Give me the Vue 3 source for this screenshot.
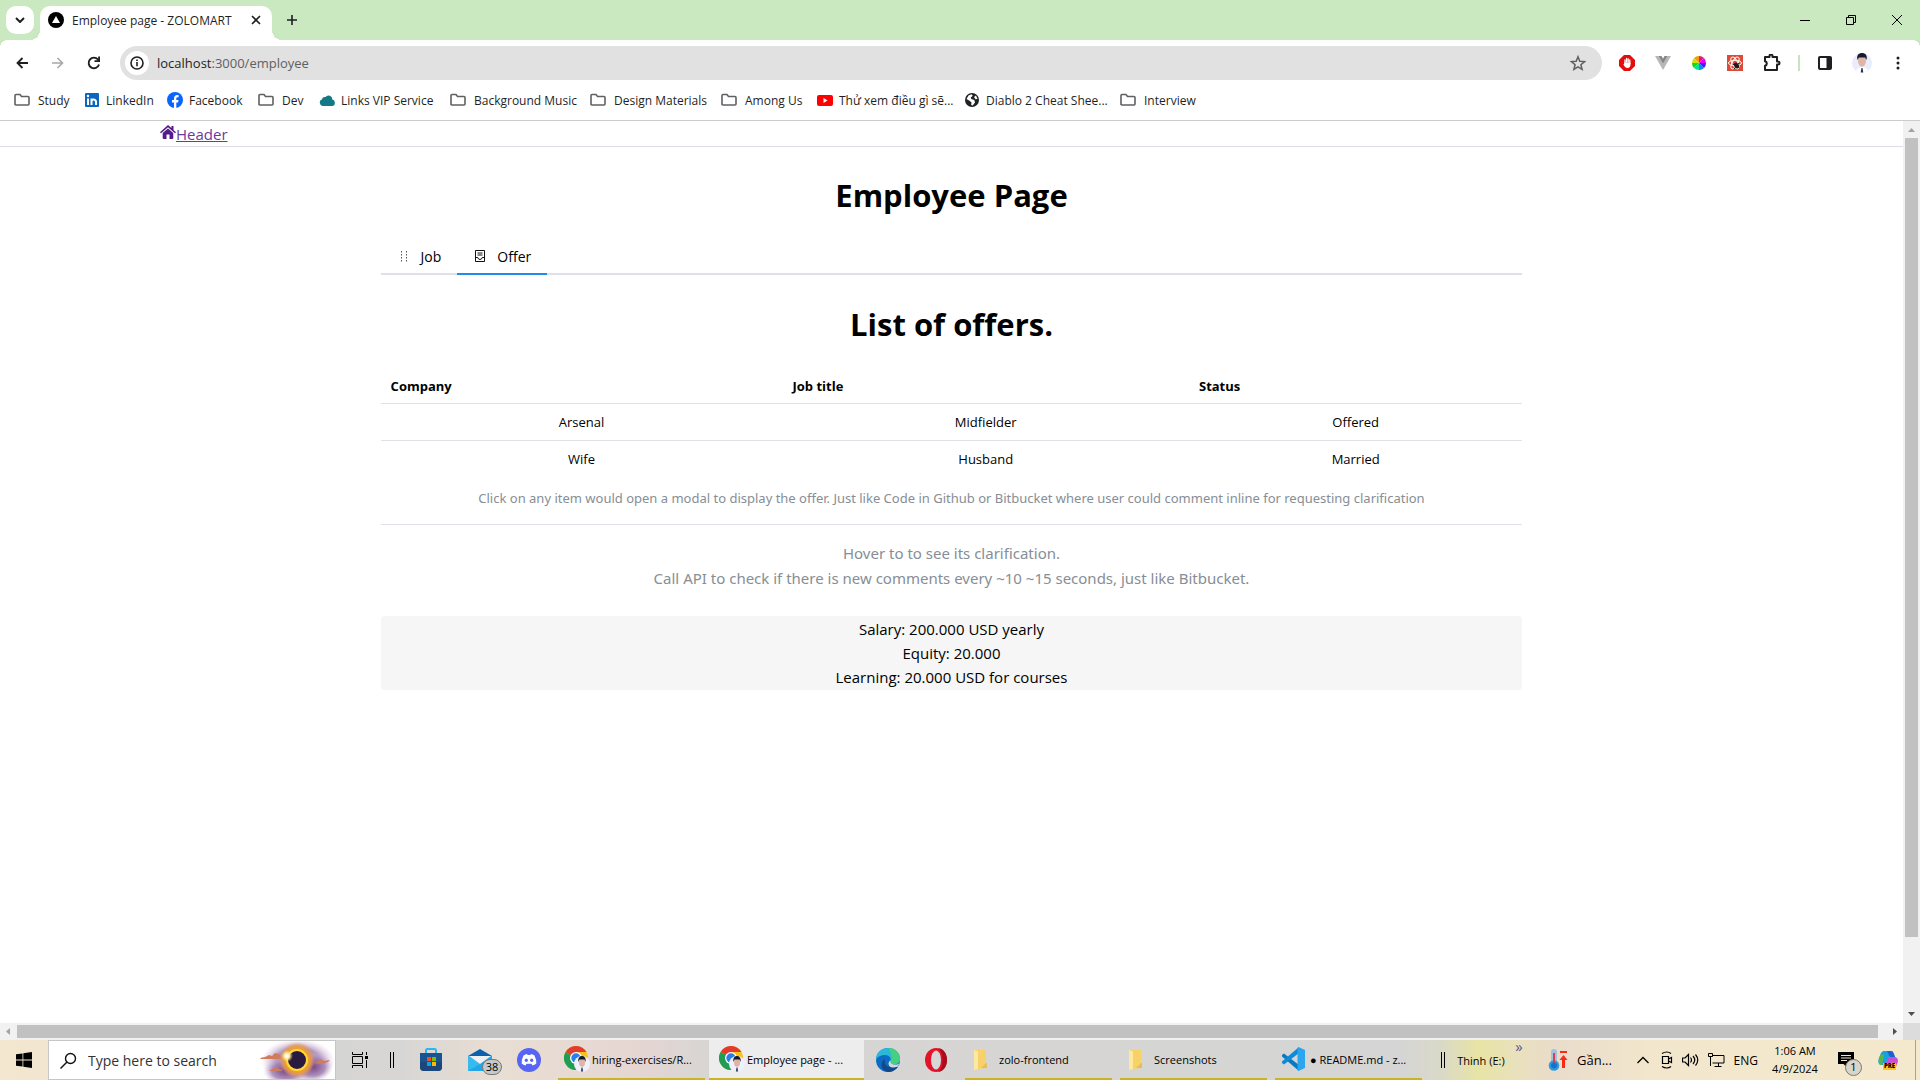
<script setup>
import { ref } from 'vue'

const bookmarks = [
  { name: 'Study', icon: 'folder', width: 70 },
  { name: 'LinkedIn', icon: 'linkedin', width: 83 },
  { name: 'Facebook', icon: 'facebook', width: 91 },
  { name: 'Dev', icon: 'folder', width: 61 },
  { name: 'Links VIP Service', icon: 'cloud', width: 131 },
  { name: 'Background Music', icon: 'folder', width: 140 },
  { name: 'Design Materials', icon: 'folder', width: 131 },
  { name: 'Among Us', icon: 'folder', width: 96 },
  { name: 'Thử xem điều gì sẽ...', icon: 'youtube', width: 147 },
  { name: 'Diablo 2 Cheat Shee...', icon: 'globe', width: 156 },
  { name: 'Interview', icon: 'folder', width: 90 },
]

const offers = [
  { company: 'Arsenal', title: 'Midfielder', status: 'Offered' },
  { company: 'Wife', title: 'Husband', status: 'Married' },
]

const activeTab = ref('offer')
const search = ref('')
</script>

<template>
  <div class="screen">
    <header class="tabstrip">
      <button class="tab-search" aria-label="Search tabs">
        <svg width="10" height="6" viewBox="0 0 10 6"><path d="M1 1l4 4 4-4" fill="none" stroke="#1f1f1f" stroke-width="2" /></svg>
      </button>
      <div class="browser-tab">
        <svg width="16" height="16" viewBox="0 0 16 16"><circle cx="8" cy="8" r="8" /><path d="M8 4l4 7H4z" fill="#fff" /></svg>
        <span class="browser-tab-title">Employee page - ZOLOMART</span>
        <button class="tab-close" aria-label="Close tab">
          <svg width="10" height="10" viewBox="0 0 10 10"><path d="M1 1l8 8M9 1l-8 8" stroke="#1f1f1f" stroke-width="1.600" /></svg>
        </button>
      </div>
      <button class="new-tab" aria-label="New tab">
        <svg width="10" height="10" viewBox="0 0 10 10"><path d="M5 0v10M0 5h10" stroke="#1f1f1f" stroke-width="1.600" /></svg>
      </button>
      <div class="window-controls">
        <button aria-label="Minimize"><svg width="10" height="10" viewBox="0 0 10 10"><path d="M0 5.500h10" stroke="#000" /></svg></button>
        <button aria-label="Restore"><svg width="10" height="10" viewBox="0 0 10 10"><path d="M.5 2.500h7v7h-7zM2.500 2.500v-2h7v7h-2" fill="none" stroke="#000" /></svg></button>
        <button aria-label="Close"><svg width="10" height="10" viewBox="0 0 10 10"><path d="M0 0l10 10M10 0L0 10" stroke="#000" /></svg></button>
      </div>
    </header>

    <div class="toolbar">
      <div class="nav-buttons">
        <button aria-label="Back"><svg width="12" height="12" viewBox="0 0 12 12"><path d="M12 6H1.500M6.500 1L1.500 6l5 5" fill="none" stroke="#1f1f1f" stroke-width="1.800" /></svg></button>
        <button aria-label="Forward" disabled><svg width="12" height="12" viewBox="0 0 12 12"><path d="M0 6h10.500M5.500 1l5 5-5 5" fill="none" stroke="#a8a8a8" stroke-width="1.600" /></svg></button>
        <button aria-label="Reload"><svg width="14" height="14" viewBox="0 0 14 14"><path d="M12 8.500A5.300 5.300 0 1 1 11 3.500L12.500 5" fill="none" stroke="#1f1f1f" stroke-width="1.900" /><path d="M13 .5V6H7.500V4.300h3.700V.5z" fill="#1f1f1f" /></svg></button>
      </div>
      <div class="omnibox">
        <button class="site-info" aria-label="View site information">
          <svg width="14" height="14" viewBox="0 0 14 14"><circle cx="7" cy="7" r="6" fill="none" stroke="#1f1f1f" stroke-width="1.600" /><path d="M7 6v4.300M7 3.500v1.600" stroke="#1f1f1f" stroke-width="1.600" /></svg>
        </button>
        <a class="url" href="http://localhost:3000/employee">localhost<span>:3000/employee</span></a>
        <button class="star" aria-label="Bookmark this tab">
          <svg width="16" height="16" viewBox="0 0 16 16"><path d="M8 1.700l1.800 4.500 4.800.4-3.700 3.100 1.200 4.700L8 11.900l-4.100 2.500 1.200-4.700-3.700-3.100 4.800-.4z" fill="none" stroke="#5f6063" stroke-width="1.500" /></svg>
        </button>
      </div>
      <div class="extensions">
        <svg width="16" height="16" viewBox="0 0 16 16"><path d="M5 0h6l5 5v6l-5 5H5l-5-5V5z" fill="#e40d0d" /><path d="M6 9V5M7.600 7V3.500M9.200 7V3.800M10.800 9V5" stroke="#fff" stroke-width="1.300" stroke-linecap="round" /><path d="M5.400 7.500h6V10c0 2-1.200 3-3 3-1.500 0-2.500-.8-4-3.500l.8-.8z" fill="#fff" /></svg>
        <svg width="16" height="16" viewBox="0 0 16 16"><path d="M0 1h3.500L8 8.500 12.500 1H16L8 15z" fill="#b7b7b7" /><path d="M3.500 1h3L8 3.700 9.500 1h3L8 8.800z" fill="#858585" /></svg>
        <svg width="16" height="16" viewBox="0 0 16 16"><g transform="translate(8 8)"><path d="M0 0V-7A7 7 0 0 1 5-5z" fill="#e11d73" /><path d="M0 0L5-5A7 7 0 0 1 7 0z" fill="#e100ff" /><path d="M0 0H7A7 7 0 0 1 5 5z" fill="#4915ff" /><path d="M0 0L5 5A7 7 0 0 1 0 7z" fill="#0088f5" /><path d="M0 0V7A7 7 0 0 1-5 5z" fill="#00e49a" /><path d="M0 0L-5 5A7 7 0 0 1-7 0z" fill="#14d815" /><path d="M0 0H-7A7 7 0 0 1-5-5z" fill="#c5e80a" /><path d="M0 0L-5-5A7 7 0 0 1 0-7z" fill="#f39b08" /></g></svg>
        <svg width="16" height="16" viewBox="0 0 16 16"><path d="M0 0h16v16H0z" fill="#dc4a38" /><g fill="none" stroke="#fff"><ellipse cx="8" cy="8" rx="6.500" ry="2.700" /><ellipse cx="8" cy="8" rx="6.500" ry="2.700" transform="rotate(60 8 8)" /><ellipse cx="8" cy="8" rx="6.500" ry="2.700" transform="rotate(120 8 8)" /></g><ellipse cx="9.500" cy="10.500" rx="2.300" ry="3" fill="#24191a" transform="rotate(-35 9.500 10.500)" /><path d="M5.500 9l7 4M7 14l5-6" stroke="#24191a" /></svg>
        <svg width="18" height="18" viewBox="0 0 18 18"><path d="M2 3h4.500V2a1.500 1.500 0 0 1 3 0v1H14v4.500h1a1.500 1.500 0 0 1 0 3h-1V16H2v-4.300a2.300 2.300 0 0 0 0-4.500z" fill="none" stroke="#1f1f1f" stroke-width="2" stroke-linejoin="round" /></svg>
        <i class="toolbar-divider"></i>
        <svg width="14" height="14" viewBox="0 0 14 14"><rect x="1" y="1" width="12" height="12" rx="1" fill="none" stroke="#1f1f23" stroke-width="2" /><path d="M8.500 1H13v12H8.500z" fill="#1f1f23" /></svg>
        <svg width="20" height="20" viewBox="0 0 20 20"><circle cx="10" cy="10" r="10" fill="#e9edfb" /><path d="M4 17c2-2 4-3 6-3s4 1 6 3c-3 4-9 4-12 0z" fill="#fff" /><ellipse cx="10" cy="8" rx="4" ry="5.500" fill="#dfb5a5" /><path d="M5.500 7C4 1 8 0 10 0s6 1 4.500 7L13 4.500H7z" fill="#161a2c" /><path d="M9.500 15h1l.8 4.500H8.700z" fill="#272e50" /></svg>
        <svg width="12" height="16" viewBox="-4 0 12 16" fill="#1f1f1f"><circle cx="2" cy="3" r="1.500" /><circle cx="2" cy="8" r="1.500" /><circle cx="2" cy="13" r="1.500" /></svg>
      </div>
    </div>

    <nav class="bookmarks">
      <a v-for="b in bookmarks" :key="b.name" href="#" :class="{ site: b.icon !== 'folder' }" :style="{ width: b.width + 'px' }">
        <svg v-if="b.icon === 'folder'" width="16" height="16" viewBox="0 0 16 16"><path d="M1 13V3.500q0-1 1-1h4L7.500 4.500H14q1 0 1 1V12q0 1-1 1H2q-1 0-1-1z" fill="none" stroke="#5f6063" stroke-width="1.600" /></svg>
        <svg v-else-if="b.icon === 'linkedin'" width="16" height="16" viewBox="0 0 16 16"><rect x="1" y="1" width="14" height="14" rx="1" fill="#0a66c2" /><path d="M4 6.500V13M7.500 6.500V13M7.500 9.500q0-2 2-2T12 9.500V13" fill="none" stroke="#fff" stroke-width="2" /><circle cx="4" cy="4" r="1.200" fill="#fff" /></svg>
        <svg v-else-if="b.icon === 'facebook'" width="16" height="16" viewBox="0 0 16 16"><circle cx="8" cy="8" r="8" fill="#0866ff" /><path d="M7 16v-5.500H5V8h2V6.500C7 4.200 8.300 3 10.200 3l1.400.1v2.100h-1C9.500 5.200 9.300 5.900 9.300 6.600V8h2.200l-.4 2.500H9.300V16z" fill="#fff" /></svg>
        <svg v-else-if="b.icon === 'cloud'" width="16" height="16" viewBox="0 0 16 16"><path d="M3.500 14A3.500 3.500 0 0 1 3 7.300 3 3 0 0 1 6.500 5a3.800 3.800 0 0 1 6.800 2.500A3.300 3.300 0 0 1 13 14z" fill="#147987" /></svg>
        <svg v-else-if="b.icon === 'youtube'" width="16" height="16" viewBox="0 0 16 16"><rect y="3" width="16" height="11" rx="2" fill="#f00" /><path d="M6.500 6v5L10.500 8.500z" fill="#fff" /></svg>
        <svg v-else width="16" height="16" viewBox="0 0 16 16"><circle cx="8" cy="8" r="7" fill="#202124" /><path d="M2.500 7l2-3.500 3-1.200 1.300 1.500-2 1.700.5 1.500 3 1 .7 2.500-2.300 3-1.500-.5.300-2.500-2-1.800zM10 5l2-1.500L13.500 7l-2 .3z" fill="#fff" /></svg>
        <span>{{ b.name }}</span>
      </a>
    </nav>

    <div class="viewport">
      <main class="page">
        <div class="site-header">
          <a href="/">
            <svg width="16" height="14" viewBox="0 0 16 14"><path d="M8 0l3.500 3V1H13.500V5L16 7.200l-1 1.100L8 2.200l-7 6.100L0 7.200zM8 3.500l5.300 4.600V13a1 1 0 0 1-1 1H9.500V9.500h-3V14H3.700a1 1 0 0 1-1-1V8.100z" fill="#551a8b" /></svg><span>Header</span>
          </a>
        </div>
        <div class="container">
          <h1>Employee Page</h1>
          <div class="tabs" role="tablist">
            <button role="tab" :aria-selected="activeTab === 'job'" @click="activeTab = 'job'">
              <svg width="14" height="14" viewBox="0 0 14 14" fill="#555"><path d="M4 2h1v1.500H4zM9 2h1v1.500H9zM4 5h1v1.500H4zM9 5h1v1.500H9zM4 8h1v1.500H4zM9 8h1v1.500H9zM4 11h1v1.500H4zM9 11h1v1.500H9z" /></svg>
              Job
            </button>
            <button role="tab" :aria-selected="activeTab === 'offer'" @click="activeTab = 'offer'">
              <svg width="14" height="14" viewBox="0 0 14 14" fill="none" stroke="#111"><path d="M2.500 1.500h9v11h-9zM4.500 4h5M4.500 6h5M2.500 8.500h2.300q.4 2 2.200 2t2.200-2h2.300" /></svg>
              Offer
            </button>
          </div>
          <h1>List of offers.</h1>
          <table>
            <caption>Click on any item would open a modal to display the offer. Just like Code in Github or Bitbucket where user could comment inline for requesting clarification</caption>
            <colgroup><col class="col-company" /><col class="col-title" /><col class="col-status" /></colgroup>
            <thead>
              <tr><th>Company</th><th>Job title</th><th>Status</th></tr>
            </thead>
            <tbody>
              <tr v-for="o in offers" :key="o.company"><td>{{ o.company }}</td><td>{{ o.title }}</td><td>{{ o.status }}</td></tr>
            </tbody>
          </table>
          <hr />
          <p class="note">Hover to to see its clarification.<br />Call API to check if there is new comments every ~10 ~15 seconds, just like Bitbucket.</p>
          <div class="terms">
            <div>Salary: 200.000 USD yearly</div>
            <div>Equity: 20.000</div>
            <div>Learning: 20.000 USD for courses</div>
          </div>
        </div>
      </main>
      <div class="vscroll">
        <svg width="7" height="4" viewBox="0 0 7 4"><path d="M0 4L3.500 0 7 4z" fill="#a3a3a3" /></svg>
        <div class="vtrack"><div class="vthumb"></div></div>
        <svg width="7" height="4" viewBox="0 0 7 4"><path d="M0 0l3.500 4L7 0z" fill="#505050" /></svg>
      </div>
    </div>
    <div class="hscroll">
      <svg width="4" height="7" viewBox="0 0 4 7"><path d="M4 0L0 3.500 4 7z" fill="#a3a3a3" /></svg>
      <div class="hthumb"></div>
      <svg width="4" height="7" viewBox="0 0 4 7"><path d="M0 0l4 3.500L0 7z" fill="#505050" /></svg>
      <div class="corner"></div>
    </div>

    <footer class="taskbar">
      <button class="start" aria-label="Start">
        <svg width="16" height="16" viewBox="0 0 16 16"><path d="M0 2.300L6.500 1.400v6.200H0zM7.300 1.300L16 0v7.600H7.300zM0 8.400h6.500v6.200L0 13.700zM7.300 8.400H16V16l-8.700-1.300z" /></svg>
      </button>
      <label class="search">
        <svg width="17" height="17" viewBox="0 0 17 17"><circle cx="10.500" cy="6.500" r="5" fill="none" stroke="#111" stroke-width="1.400" /><path d="M7 10L.5 16.500" stroke="#111" stroke-width="1.400" /></svg>
        <input v-model="search" type="text" placeholder="Type here to search" />
        <svg class="eclipse" width="76" height="38" viewBox="0 0 76 38">
          <defs>
            <radialGradient id="haze"><stop offset="0" stop-color="#7c4a86" /><stop offset=".6" stop-color="#a384b4" stop-opacity=".85" /><stop offset="1" stop-color="#d9c5dc" stop-opacity="0" /></radialGradient>
            <radialGradient id="corona"><stop offset=".6" stop-color="#f7a21c" /><stop offset=".8" stop-color="#e79a4c" stop-opacity=".8" /><stop offset="1" stop-color="#e79a6c" stop-opacity="0" /></radialGradient>
            <radialGradient id="flare"><stop offset="0" stop-color="#fff" /><stop offset=".4" stop-color="#fff3b0" /><stop offset="1" stop-color="#ffd84a" stop-opacity="0" /></radialGradient>
          </defs>
          <ellipse cx="39" cy="20" rx="37" ry="22" fill="url(#haze)" />
          <ellipse cx="26" cy="30" rx="22" ry="14" fill="url(#haze)" />
          <ellipse cx="54" cy="26" rx="20" ry="15" fill="url(#haze)" />
          <path d="M1 17l5-1 4-2 3 1 3-3 4 1 2 3 4 1-7 1H2zM10 30l4-2 3-2 3 2 3 1v1zM54 22l4-1 3-3 4 2 6-1-2 2-6 2z" fill="#d27a5c" />
          <circle cx="38" cy="19" r="18" fill="url(#corona)" />
          <circle cx="38" cy="19" r="10" fill="#2a1a3f" stroke="#ffd93a" stroke-width="2" />
          <circle cx="28" cy="15" r="6" fill="url(#flare)" />
        </svg>
      </label>
      <button class="task-view" aria-label="Task view">
        <svg width="16" height="16" viewBox="0 0 16 16"><path d="M.5 0v2.500h10V0M.5 4.500h10v7H.5zM.5 16v-2.500h10V16" fill="none" stroke="#000" /><path d="M14.500 0v3M14.500 8v8" stroke="#000" /><path d="M13 4h3v3h-3z" /></svg>
      </button>
      <i class="grip grip-left"></i>
      <button class="app-icon" aria-label="Microsoft Store">
        <svg width="24" height="24" viewBox="0 0 24 24"><path d="M7 6V2.500Q7 1 8.500 1h7Q17 1 17 2.500V6" fill="none" stroke="#2bb5f5" stroke-width="2" /><path d="M1 5h22v14q0 4-4 4H5q-4 0-4-4z" fill="#185590" /><path d="M1 14h22v5q0 4-4 4H5q-4 0-4-4z" fill="#1d477b" /><path d="M8 9h4v4H8z" fill="#f25022" /><path d="M13 9h4v4h-4z" fill="#7fba00" /><path d="M8 14h4v4H8z" fill="#00a4ef" /><path d="M13 14h4v4h-4z" fill="#ffb900" /></svg>
      </button>
      <button class="app-icon mail" aria-label="Mail">
        <svg width="24" height="24" viewBox="0 0 24 24"><path d="M0 8l12-7 12 7v4H0z" fill="#0b61ad" /><path d="M0 8h24v15H0z" fill="#23a5e8" /><path d="M0 8l12 8L0 23z" fill="#37baf0" /><path d="M1 8h22l-11 8z" fill="#eef0f2" /></svg>
        <span class="badge">38</span>
      </button>
      <button class="app-icon" aria-label="Discord">
        <svg width="24" height="24" viewBox="0 0 24 24"><circle cx="12" cy="12" r="12" fill="#5865f2" /><path d="M6.500 7.500q2-1.300 3.500-1.500l.6 1h2.800l.6-1q1.500.2 3.500 1.500 2 4 1.800 8-1.600 1.500-3.800 2l-1-1.700h-5L8.500 17.500q-2.200-.5-3.800-2-.2-4 1.800-8z" fill="#fff" /><ellipse cx="9.300" cy="12.300" rx="1.600" ry="1.800" fill="#5865f2" /><ellipse cx="14.700" cy="12.300" rx="1.600" ry="1.800" fill="#5865f2" /></svg>
      </button>
      <div class="chrome-tasks">
        <button v-for="(label, n) in ['hiring-exercises/R...', 'Employee page - ...']" :key="label" class="task chrome" :class="{ current: n === 1 }">
          <svg width="26" height="26" viewBox="0 0 26 26"><circle cx="12" cy="12" r="12" fill="#fbc116" /><path d="M12 12L1.600 6A12 12 0 0 1 22.400 6H12z" fill="#e33b2e" /><path d="M1.600 6A12 12 0 0 0 12 24l5.200-9-5.200-3z" fill="#1f9d55" /><circle cx="12" cy="12" r="6" fill="#fff" /><circle cx="12" cy="12" r="4.700" fill="#2b7de9" /><circle cx="18" cy="18" r="8" fill="#eef0fb" /><ellipse cx="18" cy="16.500" rx="3" ry="4.200" fill="#deb5a4" /><path d="M14.500 16c-1-5 2-6 3.500-6s4.500 1 3.500 6L20.500 13.500h-5z" fill="#161a2c" /><path d="M17.500 21.500h1l.6 4h-2.200z" fill="#343b66" /></svg>
          <span>{{ label }}</span>
        </button>
      </div>
      <button class="app-icon edge" aria-label="Edge">
        <svg width="24" height="24" viewBox="0 0 24 24"><circle cx="12" cy="12" r="12" fill="#0c6cc4" /><path d="M0 12C0 4 6 0 12 0c7 0 12 5 12 10.500 0 4-3 6-6.500 6-3 0-4-1-3.500-2.500C16 10 13 7 9 7c-5 0-8 2.500-9 5z" fill="#2bb7d9" /><path d="M13 0c7 .5 11 5 11 10.500 0 4-3 6-6.500 6-3 0-4-1-3.500-2.500C18 8 13 4 13 0z" fill="#45cf80" /><path d="M9 11c-2 7 5 10 13 7.500C20 22 16 24 12 24c-8-1-8-11-3-13z" fill="#114a8b" /><path d="M14.500 12.500q-.8 4 4 4.200 3 0 4.500-1.200-.5 2-1 3-9 3-9.500-3 .3-2.500 2-3z" fill="#d7d7d7" /></svg>
      </button>
      <button class="app-icon opera" aria-label="Opera">
        <svg width="24" height="24" viewBox="0 0 24 24"><ellipse cx="12" cy="12" rx="11" ry="12" fill="#e3142a" /><path d="M14 0c12 1 12 23 0 24 6-3 6-21 0-24z" fill="#a70d1c" /><ellipse cx="12" cy="12" rx="5" ry="9.500" fill="#d7d7d7" /></svg>
      </button>
      <button v-for="label in ['zolo-frontend', 'Screenshots']" :key="label" class="task folder">
        <svg width="24" height="24" viewBox="0 0 24 24"><path d="M5 3h12v18l-8 1z" fill="#f7d269" /><path d="M5 3l4 1.500V22l-4 1z" fill="#ffe8a0" /><path d="M17 16h1v5h-6z" fill="#e9bd54" /></svg>
        <span>{{ label }}</span>
      </button>
      <button class="task code">
        <svg width="24" height="24" viewBox="0 0 24 24"><path d="M1 8l2-1.500L18 18v6L1 9.500z" fill="#0879c4" /><path d="M1 16l2 1.500L18 6V0L1 14.500z" fill="#0e8ad8" /><path d="M17.500 0L24 3v18l-6.500 3-1-1V1z" fill="#2aa5ee" /></svg>
        <span>● README.md - z...</span>
      </button>
      <i class="grip grip-right"></i>
      <button class="drive">Thinh (E:)</button>
      <button class="more">»</button>
      <button class="weather">
        <svg width="20" height="22" viewBox="0 0 20 22"><rect x="3" y="0" width="6" height="17" rx="3" fill="#9fc3dc" /><circle cx="6" cy="16.500" r="5.300" fill="#2e9be0" /><path d="M6 4v11" stroke="#e53950" stroke-width="2" /><circle cx="6" cy="16.500" r="3" fill="#1774c4" /><path d="M12 2h7v2h-7zM15.500 6l4 5h-2.500v8h-3v-8h-2.500z" fill="#fa2b14" /></svg>
        <span>Gần...</span>
      </button>
      <div class="tray">
        <svg class="chevron" width="12" height="8" viewBox="0 0 12 8"><path d="M.5 7L6 1.500 11.500 7" fill="none" stroke="#000" stroke-width="1.300" /></svg>
        <svg width="12" height="18" viewBox="0 0 12 18"><path d="M1.500 5.500h6v7h-6zM7.500 8l3-1.500v5l-3-1.500M1 2.500q5-3 9 0M1 15.500q5 3 9 0" fill="none" stroke="#000" stroke-width="1.200" /></svg>
        <svg width="17" height="14" viewBox="0 0 17 14"><path d="M.5 5H3l3.500-3.500v11L3 9H.5zM8.500 4.500q2 2.500 0 5M11 3q3.500 4 0 8M13.500 1.500q4.500 5.500 0 11" fill="none" stroke="#000" stroke-width="1.200" /></svg>
        <svg width="17" height="14" viewBox="0 0 17 14"><path d="M5 2.500h11v7.500H4.500M10.500 10v3M6.500 13.500h7M.5.5h4v3h-4zM2.500 3.500V13" fill="none" stroke="#000" /></svg>
        <span class="lang">ENG</span>
      </div>
      <time class="clock"><span>1:06 AM</span><span>4/9/2024</span></time>
      <button class="notifications" aria-label="Notifications">
        <svg width="16" height="16" viewBox="0 0 16 16"><path d="M0 0h16v12H9.500v4L5.500 12H0z" /><path d="M3 3.500h10M3 6h10M3 8.500h6" stroke="#f2e6cc" /></svg>
        <span class="badge round">1</span>
      </button>
      <button class="copilot" aria-label="Copilot">
        <svg width="20" height="20" viewBox="0 0 20 20"><path d="M6 1h7q2 0 2.500 2L17 7h-5L9 15H3q-4-1-2-7l2-5q1-2 3-2z" fill="#18a0e0" /><path d="M1 8l2-4 3 1-2 10H2q-2-2-1-7z" fill="#56b849" /><path d="M9 1h4q2 0 2.500 2L17 7h-5z" fill="#1864d0" /><path d="M10 7h7q4 1 2.500 6L18 16H7z" fill="#c64fd8" /><path d="M14 12l5 2-1 3H8z" fill="#f4717c" /></svg>
        <span class="pre">PRE</span>
      </button>
      <i class="show-desktop"></i>
    </footer>
  </div>
</template>

<style>
body { margin: 0; background: #fff; }
</style>

<style scoped>
* { box-sizing: border-box; }
.screen { display: flex; flex-direction: column; min-height: 100vh; font-family: "Open Sans", "Noto Sans", sans-serif; font-size: 12px; color: #1f1f1f; overflow: hidden; }
button { display: flex; align-items: center; justify-content: center; padding: 0; border: 0; background: none; font: inherit; color: inherit; flex: none; }
svg { display: block; flex: none; }
a { color: inherit; text-decoration: none; }

.tabstrip { display: flex; align-items: center; height: 40px; padding-left: 6px; background: #cbe9c0; }
.tab-search { width: 28px; height: 28px; border-radius: 10px; background: #fff; }
.browser-tab { position: relative; display: flex; align-items: center; align-self: flex-end; width: 232px; height: 34px; margin-left: 6px; padding: 0 11px 6px 8px; border-radius: 10px 10px 0 0; background: #fff; }
.browser-tab::before, .browser-tab::after { content: ""; position: absolute; bottom: 0; width: 10px; height: 10px; }
.browser-tab::before { left: -10px; background: radial-gradient(circle at 0 0, transparent 10px, #fff 10px); }
.browser-tab::after { right: -10px; background: radial-gradient(circle at 100% 0, transparent 10px, #fff 10px); }
.browser-tab-title { flex: 1; margin-left: 8px; white-space: nowrap; }
.tab-close { width: 10px; height: 16px; }
.new-tab { width: 28px; height: 28px; margin-left: 6px; }
.window-controls { display: flex; margin-left: auto; }
.window-controls button { width: 46px; height: 40px; }

.toolbar { display: flex; align-items: center; height: 46px; border-radius: 8px 8px 0 0; background: #fff; box-shadow: 0 -8px 0 #cbe9c0; }
.tabstrip { position: relative; }
.tabstrip::after { content: ""; position: absolute; left: 0; right: 0; top: 40px; height: 8px; background: radial-gradient(circle at 8px 8px, transparent 8px, #cbe9c0 8px) 0 0 / 8px 8px no-repeat, radial-gradient(circle at 0 8px, transparent 8px, #cbe9c0 8px) 100% 0 / 8px 8px no-repeat; }
.toolbar { box-shadow: none; }
.nav-buttons { display: flex; gap: 8px; padding-left: 8px; width: 120px; }
.nav-buttons button { width: 28px; height: 28px; }
.omnibox { display: flex; flex: 1; align-items: center; height: 34px; padding: 0 12px 0 5px; border-radius: 17px; background: #e1e1e1; font-size: 13px; }
.site-info { width: 24px; height: 24px; border-radius: 50%; background: #fff; }
.url { margin-left: 8px; color: #1f1f1f; }
.url span { color: #5f6063; }
.star { width: 24px; height: 24px; margin-left: auto; }
.extensions { display: flex; align-items: center; gap: 20px; padding: 0 16px 0 17px; }
.toolbar-divider { width: 2px; height: 16px; margin: 0 -2px 0 -3px; background: #c5e6b8; }

.bookmarks { display: flex; height: 35px; padding-left: 14px; border-bottom: 1px solid #cbcbcb; }
.bookmarks a { display: flex; align-items: center; gap: 8px; height: 28px; white-space: nowrap; flex: none; }
.bookmarks a.site { gap: 6px; }

.viewport { display: flex; flex: 1; }
.page { flex: 1; color: #000; font-size: 15px; line-height: 25px; }
.site-header { height: 26px; padding-left: 160px; border-bottom: 1px solid #dedee6; }
.site-header a { display: inline-flex; color: #6b3a9c; line-height: 24px; }
.site-header span { text-decoration: underline; }
.site-header svg { margin-top: 3px; }
.container { width: 60%; margin: 0 auto; text-align: center; }
h1 { margin: 26px 0 22px; font-size: 31px; line-height: 44px; font-weight: 700; }
.tabs + h1 { margin-top: 27px; }
.tabs { display: flex; border-bottom: 2px solid #dee2e6; }
.tabs button { gap: 10px; height: 36px; padding: 0 16px; margin-bottom: -2px; border-bottom: 2px solid #dee2e6; font-size: 14px; }
.tabs button[aria-selected="true"] { border-color: #228be6; }
table { width: 100%; border-collapse: collapse; font-size: 13px; line-height: 22px; caption-side: bottom; table-layout: fixed; }
.col-company { width: 35.2%; }
.col-title { width: 35.6%; }
.col-status { width: 29.2%; }
th { padding: 7px 10px 6px; text-align: left; font-weight: 700; border-bottom: 1px solid #dee2e6; }
td { padding: 7px 10px; }
tbody tr + tr td { border-top: 1px solid #dee2e6; }
caption { margin-top: 10px; color: #868e96; white-space: nowrap; font-family: "Noto Sans", sans-serif; }
hr { margin: 15px 0 16px; border: 0; border-top: 1px solid #dee2e6; }
.note { margin: 0 0 25px; color: #868e96; font-family: "Noto Sans", sans-serif; }
.terms { padding: 1px 0; border-radius: 4px; background: #f6f6f6; line-height: 24px; }

.vscroll { display: flex; flex-direction: column; align-items: center; width: 17px; padding: 7px 0; background: #f1f1f1; }
.vtrack { flex: 1; width: 13px; margin: 6px 0; }
.vthumb { height: 92%; background: #c1c1c1; }
.hscroll { display: flex; align-items: center; height: 17px; padding-left: 6px; background: #f1f1f1; }
.hthumb { flex: 1; height: 13px; margin: 0 15px 0 7px; background: #c1c1c1; }
.corner { width: 17px; height: 17px; margin-left: 6px; background: #dcdcdc; }

.taskbar { display: flex; align-items: center; height: 40px; color: #000; background: linear-gradient(90deg, #f4e7cf 0, #f0e4d0 4%, #d5d5d5 17%, #d8d6d4 21%, #e9ded3 26%, #e5d6d2 33%, #d7d5d4 37%, #d5d5d5 73%, #d9d9c8 75%, #e8e4a5 77%, #e9e1bd 79%, #e9dccb 81%, #f2e6cc 86%, #f4e9cd 100%); }
.taskbar .start { width: 48px; height: 40px; }
.search { display: flex; align-items: center; width: 288px; height: 40px; padding-left: 11px; border: 1px solid #c6c6c6; background: #fff; }
.search input { flex: 1; min-width: 0; height: 36px; margin-left: 11px; padding: 0; border: 0; outline: 0; background: none; font: 14px "Open Sans", sans-serif; color: #333; }
.search input::placeholder { color: #333; opacity: 1; }
.task-view { width: 48px; height: 40px; }
.grip { width: 4px; height: 16px; border: solid #000; border-width: 0 1px; flex: none; }
.grip-left { margin: 0 12px 0 6px; }
.app-icon { position: relative; width: 49px; height: 40px; }
.badge { position: absolute; left: 27px; top: 19px; width: 20px; height: 16px; border: 1px solid #777; border-radius: 8px; background: #c5c9c9; font-size: 11px; line-height: 14px; text-align: center; }
.chrome-tasks { display: flex; gap: 4px; margin-left: 5px; }
.task { justify-content: flex-start; width: 147px; height: 40px; border-bottom: 2px solid #ccb326; font-size: 11px; white-space: nowrap; }
.task.chrome { padding-left: 6px; gap: 2px; }
.task.current { width: 155px; padding-left: 10px; background: #ededed; }
.edge { margin-left: -1px; }
.opera { margin: 0 5px 0 -1px; }
.task.folder { gap: 6px; padding-left: 4px; margin-right: 8px; }
.task.code { gap: 5px; padding-left: 6px; }
.grip-right { margin-left: 19px; }
.drive { width: 50px; margin-left: 11px; font-size: 11px; white-space: nowrap; }
.more { align-self: flex-start; width: 10px; margin-left: 8px; color: #5a5a92; font-size: 15px; line-height: 12px; }
.weather { gap: 9px; margin-left: 24px; font-size: 13px; }
.tray { display: flex; align-items: center; gap: 9px; margin: 0 6px 0 auto; }
.chevron { margin-right: 3px; }
.lang { font-size: 12px; }
.clock { display: flex; flex-direction: column; align-items: center; width: 62px; font-size: 11px; line-height: 18px; }
.notifications { position: relative; width: 40px; height: 40px; }
.badge.round { left: 19px; width: 17px; height: 17px; border-radius: 50%; background: #d9d5c8; }
.copilot { position: relative; width: 40px; height: 40px; }
.copilot svg { margin-left: 4px; }
.pre { position: absolute; left: 17px; top: 23px; padding: 0 1px; background: #ffc619; font-size: 6px; line-height: 7px; font-weight: 800; }
.show-desktop { width: 5px; height: 40px; margin-left: 9px; border-left: 1px solid #aaa497; flex: none; }
</style>
